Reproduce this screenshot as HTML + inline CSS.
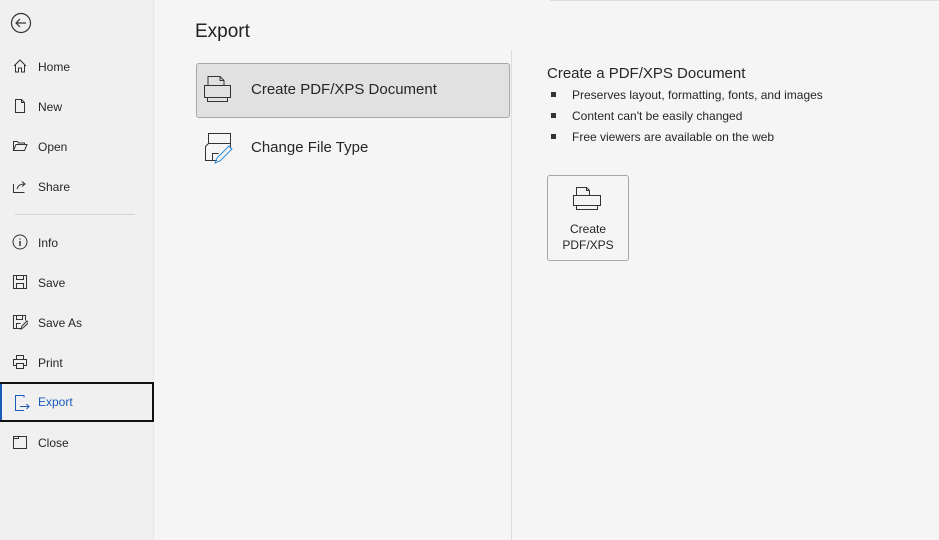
<!DOCTYPE html>
<html><head><style>
*{margin:0;padding:0;box-sizing:border-box}
body{width:939px;height:540px;overflow:hidden;background:#f5f5f5;font-family:"Liberation Sans",sans-serif;color:#262626;position:relative}
.side{position:absolute;left:0;top:0;width:154px;height:540px;background:#f0f0f0;border-right:1px solid #e6e6e6}
.item{position:absolute;left:0;width:154px;height:38px;font-size:12px;display:flex;align-items:center}
.item svg{position:absolute;left:12px;top:10px}
.item span{position:absolute;left:38px}
.sel{border:2px solid #111;color:#1a5ab8}
.sel:before{content:"";position:absolute;left:-2px;top:0;bottom:0;width:2px;background:#1a5ab8}
.t{position:absolute;white-space:nowrap}
</style></head><body>
<div class="side">
<svg style="position:absolute;left:10px;top:12px" width="22" height="22" viewBox="0 0 22 22" fill="none" stroke="#333" stroke-width="1.2"><circle cx="11" cy="11" r="9.5"/><path d="M16 11H6M10 7l-4 4 4 4"/></svg>
<div class="item" style="top:48px"><svg width="16" height="16" viewBox="0 0 16 16" fill="none" stroke="#333"><path d="M2 8L8 2l6 6M3.5 7v7h3v-4h3v4h3V7"/></svg><span>Home</span></div>
<div class="item" style="top:88px"><svg width="16" height="16" viewBox="0 0 16 16" fill="none" stroke="#333"><path d="M3.5 1.5h6l3 3v10h-9zM9.5 1.5v3h3"/></svg><span>New</span></div>
<div class="item" style="top:128px"><svg width="16" height="16" viewBox="0 0 16 16" fill="none" stroke="#333"><path d="M1.5 12.5v-9h4l1 1.5h6v2M1.5 12.5l2.5-6h11l-2.5 6z"/></svg><span>Open</span></div>
<div class="item" style="top:168px"><svg width="16" height="16" viewBox="0 0 16 16" fill="none" stroke="#333"><path d="M1.5 6v8.5h11M5 11c1-4 4-5 7-5M10 3.5l3 2.5-3 2.5"/></svg><span>Share</span></div>
<div style="position:absolute;left:15px;top:214px;width:120px;height:1px;background:#d4d4d4"></div>
<div class="item" style="top:224px"><svg width="16" height="16" viewBox="0 0 16 16" fill="none" stroke="#333"><circle cx="8" cy="8" r="7"/><path d="M8 7v5M8 4.5v1" stroke-width="1.5"/></svg><span>Info</span></div>
<div class="item" style="top:264px"><svg width="16" height="16" viewBox="0 0 16 16" fill="none" stroke="#333"><path d="M1.5 1.5h13v13h-13zM4.5 1.5v4h7v-4M4.5 14.5v-5h7v5"/></svg><span>Save</span></div>
<div class="item" style="top:304px"><svg width="16" height="16" viewBox="0 0 16 16" fill="none" stroke="#333"><path d="M9 14.5H1.5v-13h12v5M4.5 1.5v4h6v-4M4.5 14.5v-5h4M9 15l1-3 5-5 1.5 1.5-5 5z"/></svg><span>Save As</span></div>
<div class="item" style="top:344px"><svg width="16" height="16" viewBox="0 0 16 16" fill="none" stroke="#333"><path d="M4.5 5.5v-4h7v4M4.5 11.5h-3v-6h13v6h-3M4.5 9.5h7v5h-7z"/></svg><span>Print</span></div>
<div class="item sel" style="top:382px;height:40px"><svg width="16" height="18" viewBox="0 0 16 18" fill="none" stroke="#1a5ab8"><path d="M10 3.5V1.5H1.5v15H10M6 12.5h9M12.5 10l2.5 2.5-2.5 2.5"/></svg><span style="left:36px">Export</span></div>
<div class="item" style="top:424px"><svg width="16" height="16" viewBox="0 0 16 16" fill="none" stroke="#333"><path d="M1.5 2.5h13v12h-13zM1.5 4.5h5v-2"/></svg><span>Close</span></div>
</div>
<div style="position:absolute;left:550px;top:0;width:389px;height:1px;background:#ddd"></div>
<div class="t" style="left:195px;top:21px;font-size:19px;color:#222">Export</div>
<div style="position:absolute;left:196px;top:63px;width:314px;height:55px;background:#e1e1e1;border:1px solid #a8a8a8;border-radius:3px"></div>
<svg style="position:absolute;left:203px;top:75px" width="30" height="30" viewBox="0 0 30 30" fill="none" stroke="#333"><path d="M5 10.5V1.5h12l4 4v5M17 1.5v4h4M1.5 10.5h26v12h-26zM4.5 22.5v4h20v-4"/></svg>
<div class="t" style="left:251px;top:81px;font-size:15px">Create PDF/XPS Document</div>
<svg style="position:absolute;left:203px;top:132px" width="32" height="32" viewBox="0 0 32 32" fill="none" stroke="#333"><path d="M14 28.5H2.5v-14l3-3h22v5M5.5 11.5v-10h22v10M9.5 28.5v-7h6"/><path d="M12 31l2-5 12-12 3 3-12 12z" stroke="#2b8bd8"/></svg>
<div class="t" style="left:251px;top:139px;font-size:15px">Change File Type</div>
<div style="position:absolute;left:511px;top:50px;width:1px;height:490px;background:#dcdcdc"></div>
<div class="t" style="left:547px;top:65px;font-size:15px">Create a PDF/XPS Document</div>
<div class="t" style="left:551px;top:85px;font-size:12px;line-height:21px">
<div><span style="display:inline-block;width:5px;height:5px;background:#333;margin:0 16px 2px 0"></span>Preserves layout, formatting, fonts, and images</div>
<div><span style="display:inline-block;width:5px;height:5px;background:#333;margin:0 16px 2px 0"></span>Content can't be easily changed</div>
<div><span style="display:inline-block;width:5px;height:5px;background:#333;margin:0 16px 2px 0"></span>Free viewers are available on the web</div>
</div>
<div style="position:absolute;left:547px;top:175px;width:82px;height:86px;border:1px solid #a8a8a8;border-radius:3px;background:#f5f5f5"></div>
<svg style="position:absolute;left:573px;top:187px" width="30" height="30" viewBox="0 0 30 30" fill="none" stroke="#333"><path d="M3.5 8.5V0.5h10l3 3v5M13.5 0.5v3h3M0.5 8.5h27v10H0.5zM3.5 18.5v4h21v-4"/></svg>
<div class="t" style="left:547px;top:221px;width:82px;text-align:center;font-size:12px;line-height:16px;white-space:normal">Create<br>PDF/XPS</div>
</body></html>
